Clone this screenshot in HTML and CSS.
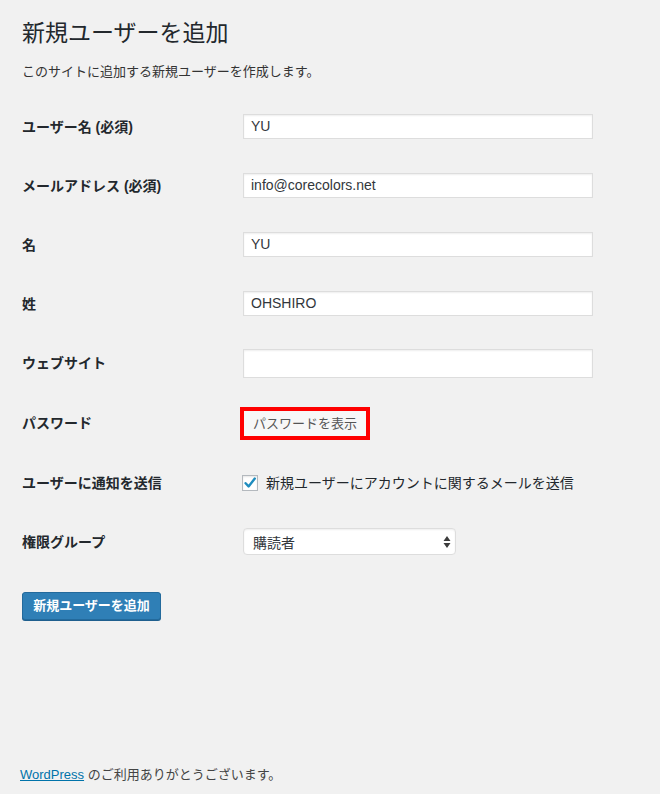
FILE: index.html
```html
<!DOCTYPE html>
<html lang="ja">
<head>
<meta charset="utf-8">
<title>新規ユーザーを追加</title>
<link rel="stylesheet" href="styles.css">
</head>
<body>
<div class="wrap">
  <h1 class="title">新規ユーザーを追加</h1>
  <p class="desc">このサイトに追加する新規ユーザーを作成します。</p>
  <div class="form">
    <div class="row"><div class="label">ユーザー名 (必須)</div><div class="field"><div class="input">YU</div></div></div>
    <div class="row"><div class="label">メールアドレス (必須)</div><div class="field"><div class="input">info@corecolors.net</div></div></div>
    <div class="row"><div class="label">名</div><div class="field"><div class="input">YU</div></div></div>
    <div class="row"><div class="label">姓</div><div class="field"><div class="input">OHSHIRO</div></div></div>
    <div class="row row-tall"><div class="label">ウェブサイト</div><div class="field"><div class="input input-empty"></div></div></div>
    <div class="row row-tall"><div class="label">パスワード</div><div class="field"><div class="pwbtn">パスワードを表示</div></div></div>
    <div class="row"><div class="label">ユーザーに通知を送信</div><div class="field check-field">
      <span class="checkbox"><svg width="14" height="14" viewBox="0 0 14 14"><path d="M2.6 7.2 L5.6 10.4 L11.8 2.6" fill="none" stroke="#1e8cbe" stroke-width="2.4" stroke-linecap="round" stroke-linejoin="round"/></svg></span>
      <span class="check-label">新規ユーザーにアカウントに関するメールを送信</span>
    </div></div>
    <div class="row"><div class="label">権限グループ</div><div class="field"><div class="select"><span>購読者</span><svg class="arrows" width="8" height="14" viewBox="0 0 8 14"><path d="M4 1 L7.5 6 L0.5 6 Z M0.5 8 L7.5 8 L4 13 Z" fill="#3c3c3c"/></svg></div></div></div>
  </div>
  <div class="submit"><span class="button">新規ユーザーを追加</span></div>
</div>
<div class="footer"><a href="#">WordPress</a> のご利用ありがとうございます。</div>
</body>
</html>
```

FILE: styles.css
```css
html, body {
  margin: 0;
  padding: 0;
}
body {
  background: #f1f1f1;
  color: #23282d;
  font-family: "Liberation Sans", "Noto Sans CJK JP", sans-serif;
  font-size: 13px;
  width: 660px;
  height: 794px;
  position: relative;
  overflow: hidden;
}
.wrap {
  padding: 0 0 0 22px;
}
.title {
  margin: 0;
  padding-top: 19px;
  font-size: 23px;
  line-height: 29px;
  font-weight: normal;
  color: #23282d;
}
.desc {
  margin: 14px 0 0 0;
  font-size: 13px;
  line-height: 20px;
  color: #333;
}
.form {
  margin-top: 15px;
}
.row {
  display: grid;
  grid-template-columns: 221px 1fr;
  align-items: center;
  height: 59px;
}
.row-tall {
  height: 60px;
}
.label {
  font-size: 14px;
  font-weight: bold;
  color: #23282d;
  line-height: 20px;
}
.field {
  display: flex;
  align-items: center;
}
.input {
  box-sizing: border-box;
  width: 350px;
  height: 25px;
  background: #fff;
  border: 1px solid #ddd;
  box-shadow: inset 0 1px 2px rgba(0,0,0,0.07);
  padding: 0 7px;
  font-size: 14px;
  line-height: 23px;
  color: #32373c;
}
.input-empty {
  height: 29px;
}
.pwbtn {
  margin-left: 1px;
  box-sizing: border-box;
  width: 122px;
  height: 25px;
  background: #f7f7f7;
  outline: 4px solid #ff0000;
  font-size: 13px;
  line-height: 25px;
  color: #555;
  text-align: center;
}
.check-field {
  gap: 8px;
}
.checkbox {
  box-sizing: border-box;
  width: 16px;
  height: 16px;
  margin-left: -1px;
  border: 1px solid #b4b9be;
  background: #fff;
  box-shadow: inset 0 1px 2px rgba(0,0,0,0.1);
  display: flex;
  align-items: center;
  justify-content: center;
}
.checkbox svg {
  display: block;
}
.check-label {
  font-size: 14px;
  color: #23282d;
  line-height: 20px;
}
.select {
  box-sizing: border-box;
  width: 213px;
  height: 27px;
  background: #fff;
  border: 1px solid #ddd;
  border-radius: 4px;
  box-shadow: inset 0 1px 2px rgba(0,0,0,0.07);
  display: flex;
  align-items: center;
  justify-content: space-between;
  padding: 0 4px 0 9px;
  font-size: 14px;
  color: #32373c;
}
.arrows {
  display: block;
}
.submit {
  margin-top: 21px;
}
.button {
  display: inline-block;
  box-sizing: border-box;
  width: 139px;
  height: 28px;
  background: #2f7fb6;
  border: 1px solid #236a9c;
  border-radius: 3px;
  box-shadow: 0 1px 0 #1f5f8e;
  color: #fff;
  font-size: 13px;
  font-weight: bold;
  line-height: 26px;
  text-align: center;
}
.footer {
  position: absolute;
  left: 20px;
  top: 765px;
  font-size: 13px;
  line-height: 20px;
  color: #444;
}
.footer a {
  color: #0073aa;
  text-decoration: underline;
}
```
